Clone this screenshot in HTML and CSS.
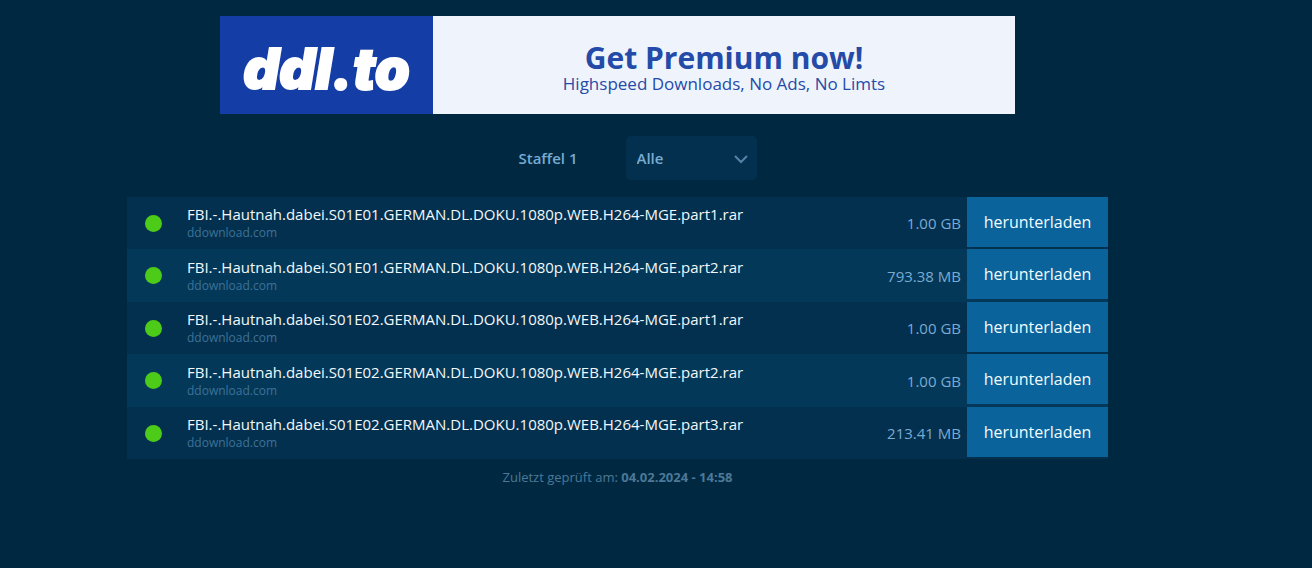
FILE: index.html
```html
<!DOCTYPE html>
<html lang="de">
<head>
<meta charset="utf-8">
<meta name="viewport" content="width=device-width, initial-scale=1">
<title>Downloads</title>
<link rel="stylesheet" href="styles.css">
</head>
<body>
<main class="page">
  <a class="banner" href="#premium">
    <span class="banner-logo">ddl.to</span>
    <span class="banner-copy">
      <strong class="banner-title">Get Premium now!</strong>
      <span class="banner-text">Highspeed Downloads, No Ads, No Limts</span>
    </span>
  </a>
  <form class="filter">
    <label class="filter-label" for="episode">Staffel 1</label>
    <span class="select-wrap">
      <select class="select" id="episode"><option>Alle</option></select>
      <svg class="chevron" viewBox="0 0 14 10" aria-hidden="true"><path d="M1 2 7 8 13 2"/></svg>
    </span>
  </form>
  <table class="files">
    <tbody>
      <tr class="file"><td class="status"><span class="dot"></span></td><td class="info"><span class="name">FBI.-.Hautnah.dabei.S01E01.GERMAN.DL.DOKU.1080p.WEB.H264-MGE.part1.rar</span><span class="host">ddownload.com</span></td><td class="size">1.00 GB</td><td class="action"><button class="download" type="button">herunterladen</button></td></tr>
      <tr class="file"><td class="status"><span class="dot"></span></td><td class="info"><span class="name">FBI.-.Hautnah.dabei.S01E01.GERMAN.DL.DOKU.1080p.WEB.H264-MGE.part2.rar</span><span class="host">ddownload.com</span></td><td class="size">793.38 MB</td><td class="action"><button class="download" type="button">herunterladen</button></td></tr>
      <tr class="file"><td class="status"><span class="dot"></span></td><td class="info"><span class="name">FBI.-.Hautnah.dabei.S01E02.GERMAN.DL.DOKU.1080p.WEB.H264-MGE.part1.rar</span><span class="host">ddownload.com</span></td><td class="size">1.00 GB</td><td class="action"><button class="download" type="button">herunterladen</button></td></tr>
      <tr class="file"><td class="status"><span class="dot"></span></td><td class="info"><span class="name">FBI.-.Hautnah.dabei.S01E02.GERMAN.DL.DOKU.1080p.WEB.H264-MGE.part2.rar</span><span class="host">ddownload.com</span></td><td class="size">1.00 GB</td><td class="action"><button class="download" type="button">herunterladen</button></td></tr>
      <tr class="file"><td class="status"><span class="dot"></span></td><td class="info"><span class="name">FBI.-.Hautnah.dabei.S01E02.GERMAN.DL.DOKU.1080p.WEB.H264-MGE.part3.rar</span><span class="host">ddownload.com</span></td><td class="size">213.41 MB</td><td class="action"><button class="download" type="button">herunterladen</button></td></tr>
    </tbody>
  </table>
  <p class="checked">Zuletzt geprüft am: <strong>04.02.2024 - 14:58</strong></p>
</main>
</body>
</html>
```
FILE: styles.css
```css
* { box-sizing: border-box; }

body {
  margin: 0;
  padding: 16px 204px 16px 127px;
  background: #002941;
  color: #78abd2;
  font-family: "Open Sans", "Noto Sans", sans-serif;
  font-size: 15px;
}

.page {
  display: flex;
  flex-direction: column;
  align-items: center;
}

.banner {
  display: flex;
  width: 100%;
  max-width: 795px;
  min-height: 98px;
  background: #eff4fc;
  color: #254ba8;
  text-decoration: none;
}

.banner-logo {
  display: flex;
  flex: 0 0 213px;
  align-items: center;
  justify-content: center;
  padding-top: 8px;
  background: #153da6;
  color: #fff;
  font-family: Inter, "Open Sans", sans-serif;
  font-size: 56px;
  font-style: italic;
  font-weight: 900;
  line-height: 60px;
  -webkit-text-stroke: 2px #fff;
}

.banner-copy {
  display: flex;
  flex: 1;
  flex-direction: column;
  align-items: center;
  justify-content: center;
  padding-top: 8px;
}

.banner-title {
  font-size: 30px;
  font-weight: 700;
  line-height: 30px;
}

.banner-text {
  font-size: 17px;
  line-height: 22px;
}

.filter {
  display: flex;
  align-items: center;
  gap: 48px;
  margin: 22px 0 17px;
  padding-left: 40px;
}

.filter-label,
.select { font-weight: 600; }

.select-wrap { position: relative; }

.select {
  display: block;
  width: 131px;
  height: 44px;
  padding: 0 32px 0 11px;
  border: 0;
  border-radius: 5px;
  background: #04304f;
  color: inherit;
  font-family: inherit;
  font-size: 15px;
  appearance: none;
}

.chevron {
  position: absolute;
  top: 18px;
  right: 9px;
  width: 14px;
  height: 10px;
  fill: none;
  stroke: #5582a8;
  stroke-width: 2;
  pointer-events: none;
}

.files {
  width: 100%;
  border-collapse: collapse;
}

.file {
  height: 52px;
  background: #04304f;
}

.file:nth-child(even) {
  height: 53px;
  background: #043859;
}

.files td { padding: 0; }

.status { width: 60px; }

.dot {
  display: block;
  width: 17px;
  height: 17px;
  margin-left: 18px;
  border-radius: 50%;
  background: #4dcb19;
}

.name,
.host { display: block; }

.name {
  color: #f2f8fc;
  line-height: 20px;
}

.host {
  color: #3d7297;
  font-size: 12px;
  line-height: 18px;
}

.files .size {
  padding-right: 6px;
  text-align: right;
}

.files .action {
  width: 141px;
  vertical-align: top;
}

.download {
  display: block;
  width: 100%;
  height: 50px;
  padding: 0;
  border: 0;
  background: #0a639b;
  color: #f2fbff;
  font-family: inherit;
  font-size: 16px;
}

.checked {
  margin: 9px 0 0;
  color: #4c7898;
  font-size: 13px;
  line-height: 18px;
}
```
